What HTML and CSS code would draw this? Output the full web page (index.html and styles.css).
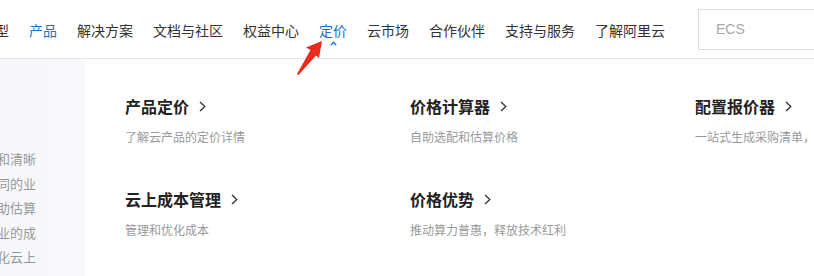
FILE: index.html
```html
<!DOCTYPE html>
<html lang="zh-CN">
<head>
    <meta charset="UTF-8">
    <meta name="viewport" content="width=device-width, initial-scale=1.0">
    <title>定价 - 阿里云</title>
    <link rel="stylesheet" href="styles.css">
</head>
<body>
    <div class="header">
        <div class="nav">
            <a class="nav-item">大模型</a>
            <a class="nav-item active">产品</a>
            <a class="nav-item">解决方案</a>
            <a class="nav-item">文档与社区</a>
            <a class="nav-item">权益中心</a>
            <a class="nav-item current">定价
                <svg class="caret" width="7" height="5" viewBox="0 0 7 5"><polyline points="0.8,4.2 3.5,1.3 6.2,4.2" fill="none" stroke="#1f6fd1" stroke-width="1.3"/></svg>
            </a>
            <a class="nav-item">云市场</a>
            <a class="nav-item">合作伙伴</a>
            <a class="nav-item">支持与服务</a>
            <a class="nav-item">了解阿里云</a>
        </div>
        <div class="search">ECS</div>
    </div>

    <div class="dropdown">
        <div class="side">
            <div class="side-text">
                <p><span>提供透明和清晰</span></p>
                <p><span>满足不同的业</span></p>
                <p><span>价格计算器帮助估算</span></p>
                <p><span>降低企业的成</span></p>
                <p><span>持续优化云上</span></p>
            </div>
        </div>

        <div class="menu">
            <div class="menu-item">
                <h3>产品定价 <svg class="chev" width="7" height="11" viewBox="0 0 7 11"><polyline points="1,1 5.8,5.5 1,10" fill="none" stroke="#333" stroke-width="1.3"/></svg></h3>
                <p>了解云产品的定价详情</p>
            </div>
            <div class="menu-item">
                <h3>价格计算器 <svg class="chev" width="7" height="11" viewBox="0 0 7 11"><polyline points="1,1 5.8,5.5 1,10" fill="none" stroke="#333" stroke-width="1.3"/></svg></h3>
                <p>自助选配和估算价格</p>
            </div>
            <div class="menu-item">
                <h3>配置报价器 <svg class="chev" width="7" height="11" viewBox="0 0 7 11"><polyline points="1,1 5.8,5.5 1,10" fill="none" stroke="#333" stroke-width="1.3"/></svg></h3>
                <p>一站式生成采购清单，快速获取报价</p>
            </div>
            <div class="menu-item">
                <h3>云上成本管理 <svg class="chev" width="7" height="11" viewBox="0 0 7 11"><polyline points="1,1 5.8,5.5 1,10" fill="none" stroke="#333" stroke-width="1.3"/></svg></h3>
                <p>管理和优化成本</p>
            </div>
            <div class="menu-item">
                <h3>价格优势 <svg class="chev" width="7" height="11" viewBox="0 0 7 11"><polyline points="1,1 5.8,5.5 1,10" fill="none" stroke="#333" stroke-width="1.3"/></svg></h3>
                <p>推动算力普惠，释放技术红利</p>
            </div>
        </div>
    </div>

    <!-- 标注箭头 -->
    <svg class="mark" width="40" height="40" viewBox="0 0 40 40">
        <polygon points="2,38 3.5,39 21,19.5 24,22 27,5 11,11.5 15.5,14" fill="#ea2a1f"/>
    </svg>
</body>
</html>
```

FILE: styles.css
```css
html, body {
    margin: 0;
    padding: 0;
    overflow: hidden;
}
body {
    font-family: "Noto Sans CJK SC", "Noto Sans", Arial, sans-serif;
    background: #fff;
    color: #333;
    width: 814px;
    height: 276px;
    position: relative;
}
.header {
    display: flex;
    align-items: center;
    height: 58px;
    border-bottom: 1px solid #e3e3e3;
}
.nav {
    display: flex;
    gap: 20px;
    margin-left: -33px;
}
.nav-item {
    position: relative;
    font-size: 14px;
    line-height: 20px;
    color: #333;
    white-space: nowrap;
    padding-top: 2px;
}
.nav-item.active,
.nav-item.current {
    color: #1f6fd1;
}
.caret {
    position: absolute;
    left: 11px;
    top: 23px;
}
.search {
    margin-left: 33px;
    flex: none;
    width: 200px;
    border: 1px solid #dcdcdc;
    box-sizing: border-box;
    height: 41px;
    padding-left: 17px;
    display: flex;
    align-items: center;
    font-family: "Liberation Sans", Arial, sans-serif;
    font-size: 14px;
    color: #aaa;
}
.dropdown {
    display: flex;
    height: 217px;
}
.side {
    width: 85px;
    flex: none;
    background: linear-gradient(90deg, #f6f7fb, #f8f9fc);
    overflow: hidden;
}
.side-text {
    width: 36px;
    padding-top: 88px;
}
.side-text p {
    display: flex;
    justify-content: flex-end;
    margin: 0;
    height: 24.5px;
    line-height: 24.5px;
    font-size: 13px;
    color: #999;
    white-space: nowrap;
}
.menu {
    display: grid;
    grid-template-columns: 285px 285px 285px;
    row-gap: 40px;
    padding: 35px 0 0 40px;
    align-content: start;
}
.menu-item h3 {
    margin: 0;
    font-size: 16px;
    line-height: 24px;
    font-weight: bold;
    color: #222;
    white-space: nowrap;
    display: flex;
    align-items: center;
}
.chev {
    margin-left: 10px;
}
.menu-item p {
    margin: 9px 0 0;
    font-size: 12px;
    line-height: 20px;
    color: #999;
    white-space: nowrap;
}
.mark {
    position: absolute;
    left: 295px;
    top: 36px;
}
```
